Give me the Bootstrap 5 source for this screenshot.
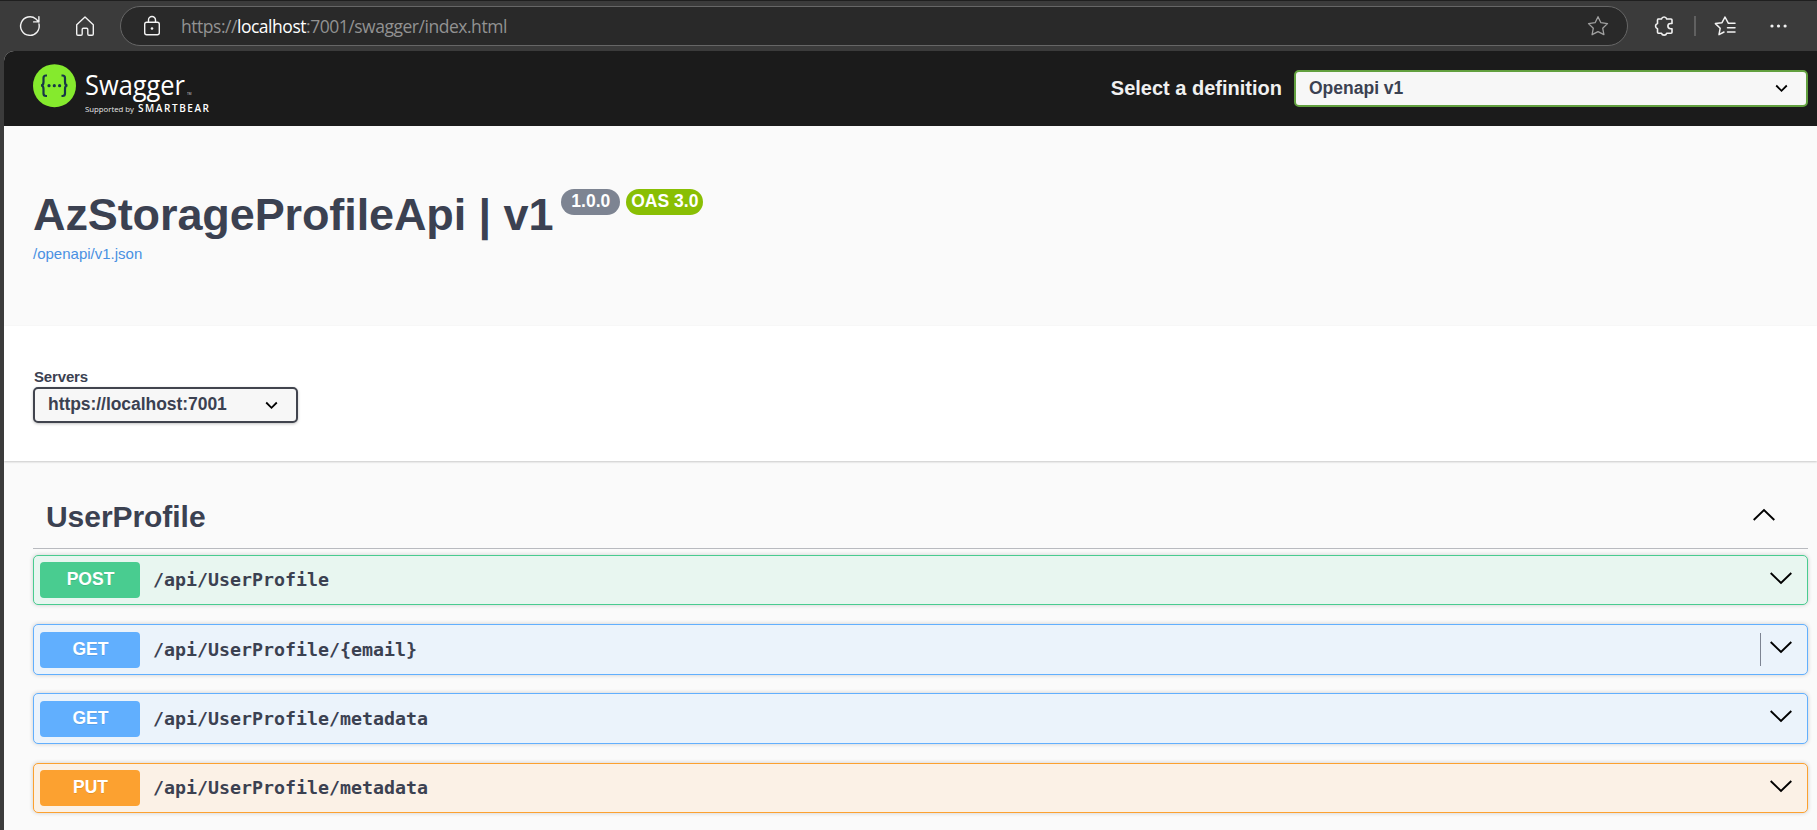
<!DOCTYPE html>
<html lang="en">
<head>
<meta charset="utf-8">
<title>Swagger UI</title>
<link href="https://cdn.jsdelivr.net/npm/bootstrap@5.3.0/dist/css/bootstrap.min.css" rel="stylesheet">
<style>
body{font-family:"Liberation Sans",Arial,sans-serif;color:#3b4151;background:#3b3b3b;width:1817px;height:830px;overflow:hidden;line-height:1}
svg{display:block;flex:none}
.toolbar{height:51px;border-top:1px solid #1f1f1f;padding:5px 0 5px 18px;background:#3b3b3b}
.address{width:1508px;height:40px;border:1px solid #666;border-radius:20px;background:#292929;margin-left:23px;padding:0 17px 0 19px}
.url{font-family:"Open Sans","Noto Sans",sans-serif;font-size:17.5px;color:#929292;margin-left:17px;white-space:nowrap;letter-spacing:-.47px;line-height:24px;padding-bottom:1px}
.url b{font-weight:400;color:#fff}
.viewport{margin-left:4px;height:779px;background:#fafafa;border-top-left-radius:10px;overflow:hidden}
.topbar{height:75px;background:#1b1b1b;padding:0 9px 0 29px}
.deflabel{font-size:20px;font-weight:700;color:#f0f0f0;margin-right:12px;padding-bottom:2px}
.pick{height:37px;border:2px solid #62a03f;border-radius:5px;background:#f7f7f7;font-size:17.5px;font-weight:700;padding:0 18px 0 13px}
.info{height:200px;padding:63px 29px 0}
.info h1{font-size:45px;font-weight:700;line-height:52px;margin:0;white-space:nowrap;letter-spacing:-.1px}
.pill{height:26px;border-radius:26px;color:#fff;font-size:17.5px;font-weight:700;line-height:24px;text-align:center}
.speclink{font-size:15px;color:#4990e2;text-decoration:none;line-height:17px;margin-top:4px}
.servers{height:135px;background:#fff;padding:42px 29px 0;box-shadow:0 1px 2px rgba(0,0,0,.2)}
.servers label{font-size:15px;font-weight:700;line-height:17px;padding-left:1px;margin-bottom:2px;letter-spacing:-.15px}
.servers .pick{width:265px;height:36px;border-color:#41444e;box-shadow:0 1px 3px rgba(0,0,0,.25)}
.servers .pick span{letter-spacing:-.05px}
.ops{padding:27px 9px 0 29px}
.tagrow{height:61px;border-bottom:1px solid rgba(59,65,81,.35);padding:0 33px 3px 13px;margin-bottom:6px}
.tagrow h3{font-size:30px;font-weight:700;margin:0;letter-spacing:-.05px}
.tagrow svg{transform:rotate(180deg);margin-bottom:5px}
.op{border:1px solid;border-radius:5px;box-shadow:0 0 4px rgba(0,0,0,.19);padding:0 15px 0 6px}
.op>svg{margin-bottom:4px}
.verb{width:100px;height:36px;border-radius:4px;color:#fff;font-size:17.5px;font-weight:700;text-align:center;line-height:34px;padding-left:1px;text-shadow:0 1px 0 rgba(0,0,0,.1)}
.path{font-family:"DejaVu Sans Mono",monospace;font-weight:700;font-size:18.28px;margin-left:13px;line-height:22px}
.post{background:#e8f6f0;border-color:#49cc90}.post .verb{background:#49cc90}
.get{background:#ebf3fb;border-color:#61affe}.get .verb{background:#61affe}
.put{background:#fbf1e6;border-color:#fca130}.put .verb{background:#fca130}
.focusline{width:1px;height:33px;background:#7d8492;margin-right:9px}
</style>
</head>
<body>
<svg width="0" height="0" class="position-absolute"><defs>
<symbol id="small-down" viewBox="0 0 13 9"><path d="M1.2 1.5 6.5 6.800l5.300-5.300" fill="none" stroke="#000" stroke-width="1.800"/></symbol>
<symbol id="big-down" viewBox="0 0 22 13"><path d="M.7 1 11 11 21.300 1" fill="none" stroke="#000" stroke-width="1.900"/></symbol>
</defs></svg>
<nav class="toolbar d-flex align-items-center">
  <svg width="24" height="24" viewBox="0 0 24 24" fill="none" stroke="#f2f2f2" stroke-width="1.400" stroke-linecap="round" stroke-linejoin="round"><path d="M21 10A9.300 9.300 0 1 1 18 5l2.800 2.900M20.900 2.600v5.300h-5.300"/></svg>
  <svg style="margin-left:31px" width="24" height="24" viewBox="0 0 24 24" fill="none" stroke="#f2f2f2" stroke-width="1.400" stroke-linejoin="round"><path d="M3.700 10.700 12 3l8.300 7.700V20q0 1.300-1.300 1.300h-3q-1.200 0-1.200-1.300v-4.500q0-1.200-1.200-1.200h-3.200q-1.200 0-1.200 1.200V20q0 1.300-1.200 1.300H5q-1.300 0-1.300-1.300z"/></svg>
  <div class="address d-flex align-items-center">
    <svg width="24" height="24" viewBox="0 0 24 24" fill="none" stroke="#f2f2f2" stroke-width="1.400"><rect x="4.700" y="8.200" width="14.600" height="12.600" rx="2"/><path d="M8.500 8.200V6a3.500 3.500 0 0 1 7 0v2.200"/><circle cx="12" cy="14.500" r="1.300" fill="#f2f2f2" stroke="none"/></svg>
    <div class="url">https://<b>localhost</b>:7001/swagger/index.html</div>
    <svg class="ms-auto" width="24" height="24" viewBox="0 0 24 24" fill="none" stroke="#a0a0a0" stroke-width="1.300" stroke-linejoin="round"><path d="m12 2.700 2.900 6 6.600.9-4.800 4.600 1.200 6.500-5.900-3.100-5.900 3.100 1.200-6.500-4.800-4.600 6.600-.9z"/></svg>
  </div>
  <svg style="margin-left:24px" width="24" height="24" viewBox="0 0 24 24" fill="none" stroke="#f2f2f2" stroke-width="1.600" stroke-linejoin="round"><path d="M6 5h3.500a2.700 2.700 0 0 1 5.200 0H19q1 0 1 1v3.500h-1.500a2.600 2.600 0 0 0 0 5.200H20v3.500q0 1-1 1h-4.300a2.700 2.700 0 0 1-5.200 0H6.500q-1 0-1-1v-3.500a2.700 2.700 0 0 1 0-5.200V6q0-1 1-1z"/></svg>
  <div style="width:2px;height:20px;background:#606060;margin-left:18px"></div>
  <svg style="margin-left:17px" width="24" height="24" viewBox="0 0 24 24" fill="none" stroke="#f2f2f2" stroke-width="1.500" stroke-linejoin="round" stroke-linecap="round"><path d="M22 9.300h-6.600L12 3 9 8.700l-6.600.9 4.800 4.600L6 20.700l5-2.700M14.500 13.700H22M14.500 18H22"/></svg>
  <svg style="margin-left:30px" width="24" height="24" viewBox="0 0 24 24" fill="#f2f2f2"><circle cx="5" cy="12" r="1.600"/><circle cx="11.500" cy="12" r="1.600"/><circle cx="18.100" cy="12" r="1.600"/></svg>
</nav>
<main class="viewport">
  <header class="topbar d-flex align-items-center">
    <svg width="180" height="60" viewBox="0 0 180 60">
      <circle cx="21.500" cy="26.700" r="21.500" fill="#85ea2d"/>
      <path d="M14 16.500h-1q-2.500 0-2.500 2.500v4q0 3.500-2.500 3.500 2.500 0 2.500 3.500v4.500q0 2.500 2.500 2.500h1M28.500 16.500h1q2.500 0 2.500 2.500v4q0 3.500 2.500 3.500-2.500 0-2.500 3.500v4.500q0 2.500-2.500 2.500h-1" fill="none" stroke="#173647" stroke-width="2.200"/>
      <g fill="#173647"><circle cx="16" cy="26.700" r="1.600"/><circle cx="21.300" cy="26.700" r="1.600"/><circle cx="26.600" cy="26.700" r="1.600"/></g>
      <g fill="#fff" font-family="Open Sans, Noto Sans, sans-serif">
      <text x="52" y="35.500" font-size="27" textLength="100" lengthAdjust="spacingAndGlyphs">Swagger</text>
      <text x="154" y="35.500" font-size="3" opacity=".8">TM</text>
      <text x="52" y="53" font-size="7.500" textLength="49" lengthAdjust="spacingAndGlyphs" opacity=".9">Supported by</text>
      <text x="105" y="53" font-size="10" font-weight="600" textLength="71">SMARTBEAR</text></g>
    </svg>
    <div class="deflabel ms-auto">Select a definition</div>
    <div class="pick d-flex align-items-center justify-content-between" style="width:514px"><span>Openapi v1</span><svg width="13" height="9"><use href="#small-down"/></svg></div>
  </header>
  <section class="info d-flex flex-column align-items-start">
    <div class="d-flex align-items-start"><h1>AzStorageProfileApi | v1</h1>
    <div class="pill" style="background:#7d8492;width:59px;margin-left:8px">1.0.0</div><div class="pill" style="background:#89bf04;width:77px;margin-left:6px">OAS 3.0</div></div>
    <a class="speclink" href="#">/openapi/v1.json</a>
  </section>
  <section class="servers position-relative d-flex flex-column">
    <label>Servers</label>
    <div class="pick d-flex align-items-center justify-content-between"><span>https://localhost:7001</span><svg width="13" height="9"><use href="#small-down"/></svg></div>
  </section>
  <section class="ops">
    <div class="tagrow d-flex align-items-center justify-content-between"><h3>UserProfile</h3><svg width="22" height="13"><use href="#big-down"/></svg></div>
    <div class="op post d-flex align-items-center" style="height:50px;margin-bottom:19px"><div class="verb">POST</div><div class="path">/api/UserProfile</div><svg class="ms-auto" width="22" height="13"><use href="#big-down"/></svg></div>
    <div class="op get d-flex align-items-center" style="height:51px;margin-bottom:18px"><div class="verb">GET</div><div class="path">/api/UserProfile/{email}</div><div class="focusline ms-auto"></div><svg width="22" height="13"><use href="#big-down"/></svg></div>
    <div class="op get d-flex align-items-center" style="height:51px;margin-bottom:19px"><div class="verb">GET</div><div class="path">/api/UserProfile/metadata</div><svg class="ms-auto" width="22" height="13"><use href="#big-down"/></svg></div>
    <div class="op put d-flex align-items-center" style="height:50px"><div class="verb">PUT</div><div class="path">/api/UserProfile/metadata</div><svg class="ms-auto" width="22" height="13"><use href="#big-down"/></svg></div>
  </section>
</main>
<script src="https://cdn.jsdelivr.net/npm/bootstrap@5.3.0/dist/js/bootstrap.bundle.min.js"></script>
</body>
</html>
